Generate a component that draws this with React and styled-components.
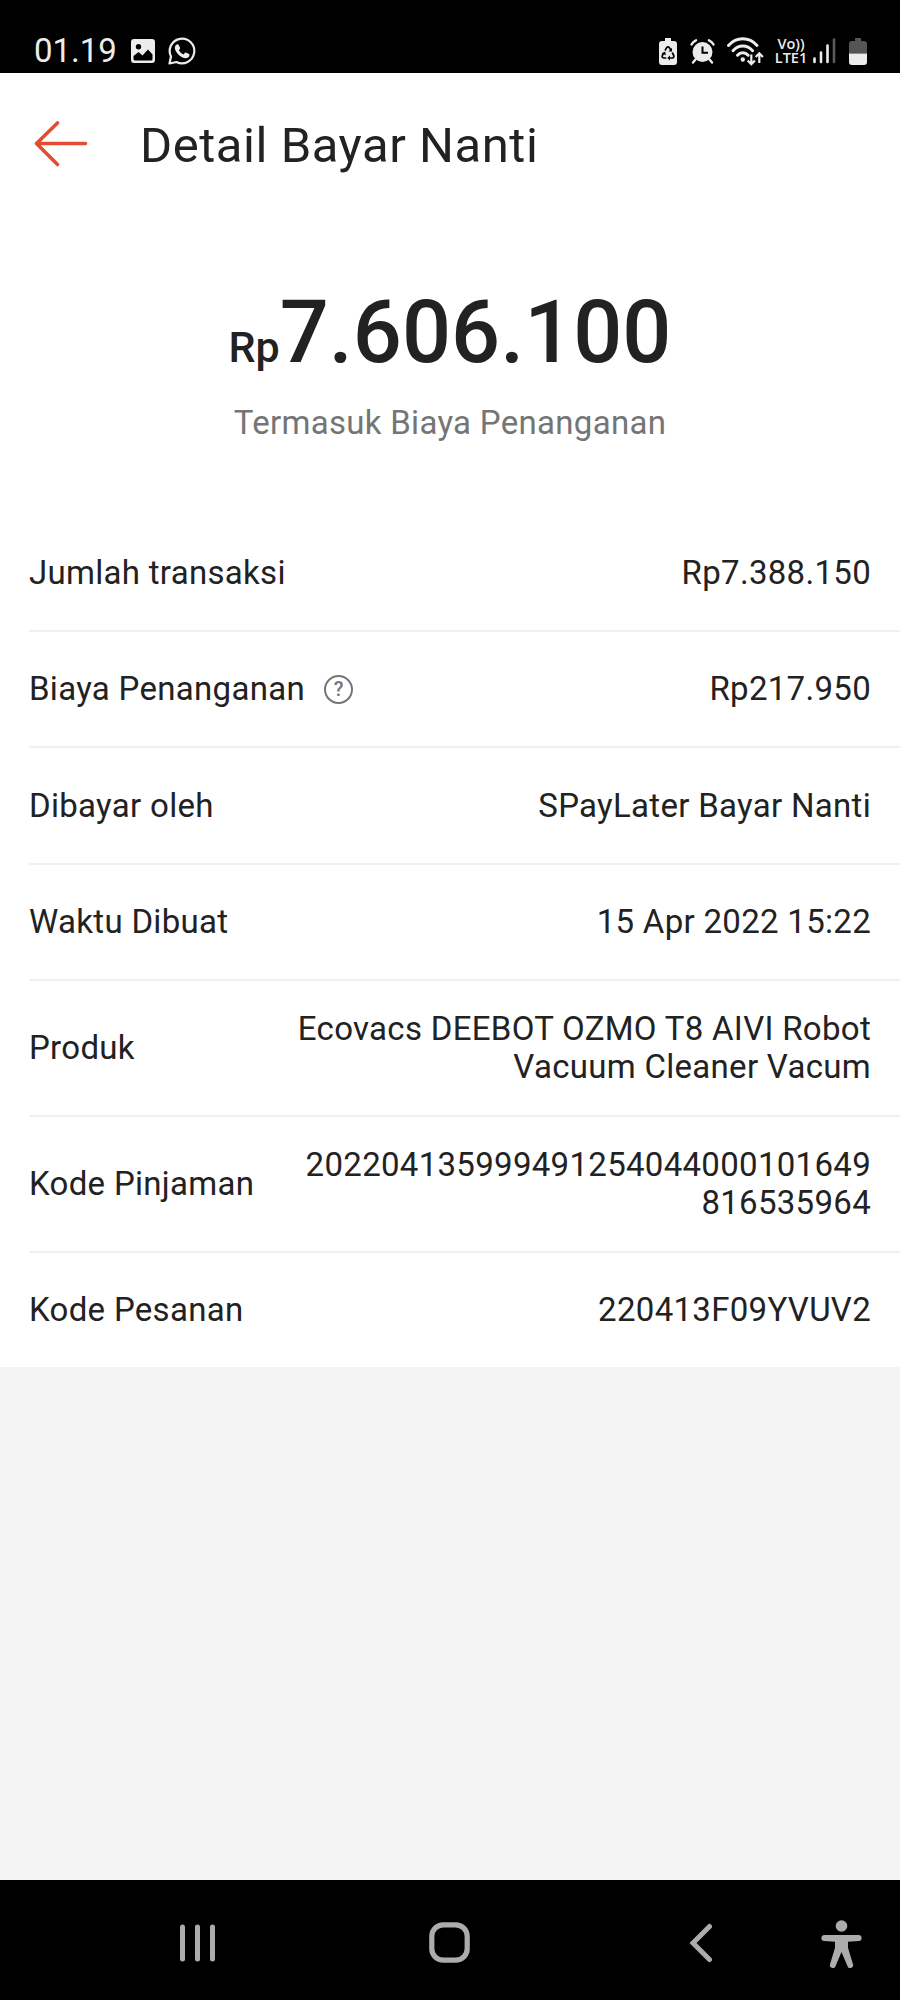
import * as React from "react";

import styled, { createGlobalStyle } from "styled-components";

const GlobalStyle = createGlobalStyle`
  * {
    box-sizing: border-box;
  }

  body {
    margin: 0;
    background: #f4f4f4;
    font-family: Roboto, "Noto Sans", sans-serif;
    color: #222;
  }

  svg {
    display: block;
    flex: none;
  }
`;

const Screen = styled.div`
  display: flex;
  flex-direction: column;
  width: 900px;
  height: 2000px;
`;

const StatusBar = styled.header`
  display: flex;
  justify-content: space-between;
  height: 73px;
  padding: 30px 33px 0 34px;
  background: #000;
  color: #ececec;
`;

const StatusGroup = styled.div`
  display: flex;
  align-items: center;
  height: 42px;
  gap: ${props => props.$gap || 0}px;
`;

const Clock = styled.span`
  font-size: 33px;
  line-height: 40px;
  width: 84px;
  white-space: nowrap;
`;

const Slot = styled.span`
  margin-right: ${props => props.$after || 0}px;
`;

const Network = styled.div`
  display: flex;
  flex-direction: column;
  align-items: center;
  width: 32px;
  margin-right: 6px;
  margin-left: 11px;
  font-family: "Open Sans", sans-serif;
  font-weight: 600;
  font-size: 14.5px;
  line-height: 14.5px;
  white-space: nowrap;
`;

const TitleBar = styled.div`
  display: flex;
  align-items: center;
  height: 142px;
  padding-left: 32px;
  gap: 51px;
  background: #fff;
`;

const Title = styled.h1`
  margin: 3px 0 0;
  font-size: 49px;
  font-weight: 400;
  line-height: 60px;
  letter-spacing: 0.55px;
`;

const Summary = styled.section`
  display: flex;
  flex-direction: column;
  align-items: center;
  height: 300px;
  padding-top: 67px;
  background: #fff;
`;

const Amount = styled.div`
  font-size: 86.4px;
  font-weight: 500;
  line-height: 102px;
  white-space: nowrap;
`;

const Currency = styled.span`
  font-size: 43px;
`;

const Note = styled.div`
  margin-top: 5px;
  color: #757575;
  font-size: 33px;
  line-height: 39px;
  letter-spacing: 0.3px;
`;

const Details = styled.dl`
  margin: 0;
  padding-left: 29px;
  background: #fff;
`;

const Row = styled.div`
  display: flex;
  align-items: center;
  justify-content: space-between;
  height: ${props => (props.$tall ? 136 : 116.5)}px;
  padding-top: ${props => (props.$tall ? 0 : 1)}px;
  padding-right: 29px;
  border-bottom: 2px solid #f0f0f0;
  font-size: 33px;
  line-height: 38.5px;
  letter-spacing: 0.3px;

  &:last-child {
    height: 114px;
    padding-top: 0;
    border-bottom: 0;
  }
`;

const Label = styled.dt`
  display: flex;
  align-items: center;
  gap: 19px;
  white-space: nowrap;
`;

const Value = styled.dd`
  margin: 0;
  text-align: right;
  white-space: pre-line;
`;

const HelpBadge = styled.span`
  display: flex;
  align-items: center;
  justify-content: center;
  width: 29px;
  height: 29px;
  border: 2px solid #757575;
  border-radius: 50%;
  color: #757575;
  font-size: 20px;
  font-weight: 500;
  line-height: 24px;
  letter-spacing: 0;
`;

const NavBar = styled.nav`
  display: flex;
  align-items: center;
  height: 120px;
  margin-top: auto;
  padding: 5px 37px 0 180px;
  background: #000;
  color: #acacac;
`;

const ImageIcon = () => (
  <svg width="24" height="24" viewBox="0 0 24 24">
    <path
      fill="currentColor"
      fillRule="evenodd"
      d="M3 0h18a3 3 0 0 1 3 3v18a3 3 0 0 1-3 3H3a3 3 0 0 1-3-3V3a3 3 0 0 1 3-3zM7.5 5a2.7 2.7 0 1 0 0 5.4 2.7 2.7 0 0 0 0-5.4zM2.5 17v3q0 1.5 1.5 1.5h16q1.5 0 1.5-1.5v-4.5L17 10.5l-5.500 6-4-3.500z"
    />
  </svg>
);

const WhatsAppIcon = () => (
  <svg width="28" height="28" viewBox="0 0 28 28">
    <path
      d="M3 19.5A12.3 12.3 0 1 1 8.5 25L1.5 26.5z"
      fill="none"
      stroke="currentColor"
      strokeWidth="2.2"
      strokeLinejoin="round"
    />
    <path
      fill="currentColor"
      d="M8.2 7.8q1-1 2.2-.4l1.800 3.600q0 1-1.400 2.300 1.800 3 4.600 4.300l1.900-2q.6-.4 4.100 1.600.6 3.400-3.700 4-3.600 0-7.600-4-3.600-4-3.200-7 .3-1.600 1.300-2.400z"
    />
  </svg>
);

const BatterySaverIcon = () => (
  <svg width="18" height="27" viewBox="0 0 18 27">
    <path
      fill="currentColor"
      d="M6 0h6v3h3a3 3 0 0 1 3 3v18a3 3 0 0 1-3 3H3a3 3 0 0 1-3-3V6a3 3 0 0 1 3-3h3z"
    />
    <path
      d="M6 12.5l1.5-2.6q1.5-1.900 3 0l1.300 2.200M13.200 14.500l1.600 3q.5 2.200-1.600 2.500h-2.700M7.300 20H4.800q-2.300-.4-1.500-2.500l1.500-2.700"
      fill="none"
      stroke="#000"
      strokeWidth="1.7"
    />
    <path d="M13 9.800v3.700H9.500zM11 17.500v5L8.300 20zM2.600 15.500l3.600-2 .6 3.800z" />
  </svg>
);

const AlarmIcon = () => (
  <svg width="25" height="25" viewBox="0 0 25 25">
    <circle cx="12.5" cy="13" r="10" fill="currentColor" />
    <path
      d="M1.500 5.500q1.500-3 4.500-4.200M19 1.300q3 1.200 4.500 4.200M5.500 20.500l-2.500 3M19.500 20.500l2.500 3"
      stroke="currentColor"
      strokeWidth="2.4"
      strokeLinecap="round"
      fill="none"
    />
    <path d="M12.500 7.500v6.300h5.500" fill="none" stroke="#000" strokeWidth="2" />
  </svg>
);

const WifiIcon = () => (
  <svg width="37" height="29" viewBox="0 0 37 29" fill="none" stroke="currentColor">
    <path
      d="M1.500 8.500q6-6.700 14.300-6.700t14.200 6.700M6 13.700q4.200-4.700 9.800-4.700t9.800 4.700M10.500 18.300q2.200-2.500 5.300-2.500t5.300 2.500"
      strokeWidth="2.9"
      strokeLinecap="round"
    />
    <circle cx="15.8" cy="22.5" r="2.2" fill="currentColor" stroke="none" />
    <path
      d="M24.300 17.500v9.500M20.700 23.500l3.600 3.700 3.600-3.700M32.300 26v-9.500M28.700 20l3.600-3.700 3.600 3.700"
      strokeWidth="2.2"
    />
  </svg>
);

const SignalIcon = () => (
  <svg width="23" height="26" viewBox="0 0 23 26">
    <path
      d="M1.500 20.500v3.500M8 14.500V24M14.500 7.500V24"
      stroke="currentColor"
      strokeWidth="2.6"
      strokeLinecap="round"
    />
    <path d="M21 1.500V24" stroke="#5a5a5a" strokeWidth="2.6" strokeLinecap="round" />
  </svg>
);

const BatteryIcon = () => (
  <svg width="18" height="27" viewBox="0 0 18 27">
    <path fill="#555" d="M6 0h6v3h3a3 3 0 0 1 3 3v9.500H0V6a3 3 0 0 1 3-3h3z" />
    <path fill="currentColor" d="M0 15.500h18V24a3 3 0 0 1-3 3H3a3 3 0 0 1-3-3z" />
  </svg>
);

const ArrowIcon = () => (
  <svg width="57" height="48" viewBox="0 0 57 48">
    <path
      d="M53.500 23.500H4.500M25.500 3L4.500 23.500l21 21"
      fill="none"
      stroke="#e54d30"
      strokeWidth="3.6"
      strokeLinecap="round"
      strokeLinejoin="round"
    />
  </svg>
);

const RecentsIcon = () => (
  <svg width="35" height="38" viewBox="0 0 35 38">
    <path
      d="M2.500 3v32M17.500 3v32M32.500 3v32"
      stroke="currentColor"
      strokeWidth="5"
      strokeLinecap="round"
    />
  </svg>
);

const HomeIcon = () => (
  <svg width="41" height="41" viewBox="0 0 41 41">
    <rect
      x="2.8"
      y="2.8"
      width="35.4"
      height="35.4"
      rx="11.5"
      fill="none"
      stroke="currentColor"
      strokeWidth="5.2"
    />
  </svg>
);

const BackIcon = () => (
  <svg width="24" height="40" viewBox="0 0 24 40">
    <path
      d="M20.500 3.500L4 20 20.500 36.500"
      fill="none"
      stroke="currentColor"
      strokeWidth="5"
      strokeLinecap="round"
    />
  </svg>
);

const AccessibilityIcon = () => (
  <svg width="41" height="52" viewBox="0 -3 41 52">
    <circle cx="20.5" cy="6" r="5.8" fill="currentColor" />
    <path
      fill="currentColor"
      d="M3.500 15h34a3 3 0 0 1 .2 6L27 21.800v6l5 16.500a2.900 2.900 0 0 1-5.600 1.600L20.500 32l-5.900 13.900a2.900 2.900 0 0 1-5.600-1.600l5-16.500v-6L3.300 21a3 3 0 0 1 .2-6z"
    />
  </svg>
);

const rows = [
  { label: "Jumlah transaksi", value: "Rp7.388.150" },
  { label: "Biaya Penanganan", value: "Rp217.950", help: true },
  { label: "Dibayar oleh", value: "SPayLater Bayar Nanti" },
  { label: "Waktu Dibuat", value: "15 Apr 2022 15:22" },
  {
    label: "Produk",
    value: "Ecovacs DEEBOT OZMO T8 AIVI Robot\nVacuum Cleaner Vacum",
    tall: true
  },
  {
    label: "Kode Pinjaman",
    value: "202204135999491254044000101649\n816535964",
    tall: true
  },
  { label: "Kode Pesanan", value: "220413F09YVUV2" }
];

class DetailRow extends React.Component {
  render() {
    const { label, value, help, tall } = this.props;
    return (
      <Row $tall={tall}>
        <Label>
          {label}
          {help && <HelpBadge>?</HelpBadge>}
        </Label>
        <Value>{value}</Value>
      </Row>
    );
  }
}

export default class App extends React.Component {
  render() {
    return (
      <Screen>
        <GlobalStyle />
        <StatusBar>
          <StatusGroup $gap={13}>
            <Clock>01.19</Clock>
            <ImageIcon />
            <WhatsAppIcon />
          </StatusGroup>
          <StatusGroup>
            <Slot $after={13}>
              <BatterySaverIcon />
            </Slot>
            <Slot $after={12}>
              <AlarmIcon />
            </Slot>
            <WifiIcon />
            <Network>
              <span>Vo))</span>
              <span>LTE1</span>
            </Network>
            <Slot $after={13}>
              <SignalIcon />
            </Slot>
            <BatteryIcon />
          </StatusGroup>
        </StatusBar>
        <TitleBar>
          <ArrowIcon />
          <Title>Detail Bayar Nanti</Title>
        </TitleBar>
        <Summary>
          <Amount>
            <Currency>Rp</Currency>7.606.100
          </Amount>
          <Note>Termasuk Biaya Penanganan</Note>
        </Summary>
        <Details>
          {rows.map(row => (
            <DetailRow key={row.label} {...row} />
          ))}
        </Details>
        <NavBar>
          <Slot $after={214}>
            <RecentsIcon />
          </Slot>
          <Slot $after={219}>
            <HomeIcon />
          </Slot>
          <Slot $after={108}>
            <BackIcon />
          </Slot>
          <Slot>
            <AccessibilityIcon />
          </Slot>
        </NavBar>
      </Screen>
    );
  }
}
